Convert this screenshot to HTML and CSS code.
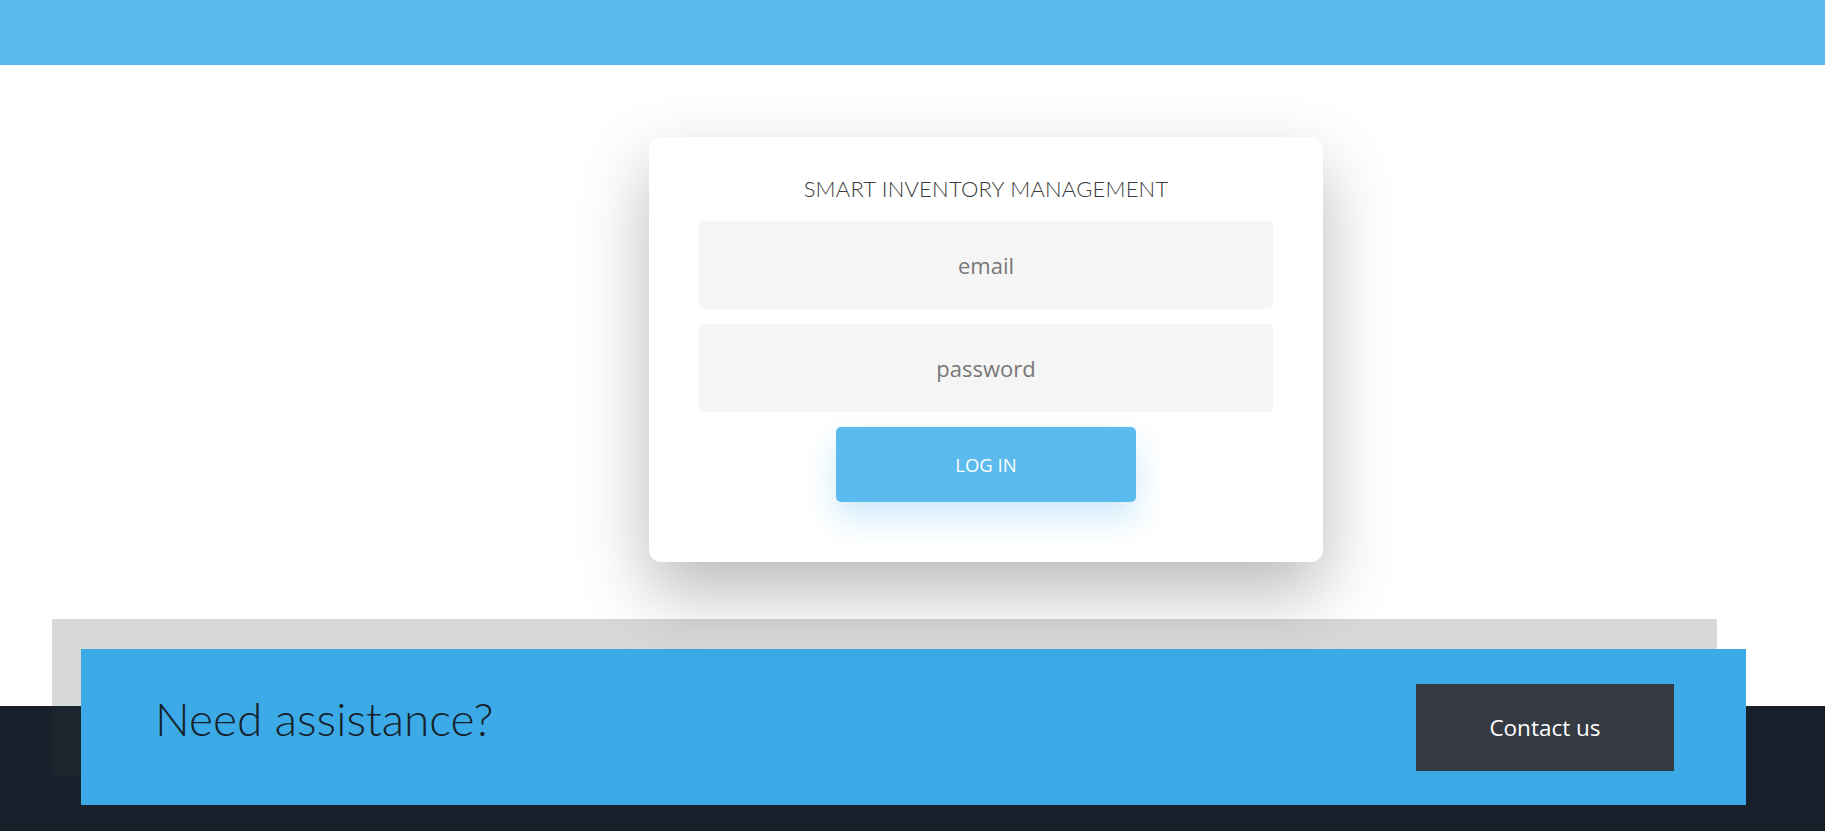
FILE: index.html
```html
<!DOCTYPE html>
<html lang="en">
<head>
<meta charset="utf-8">
<title>Smart Inventory Management</title>
<link rel="stylesheet" href="styles.css">
</head>
<body>
<header class="topbar"></header>
<main class="login-area">
  <form class="card">
    <h1 class="card-title">SMART INVENTORY MANAGEMENT</h1>
    <input class="field" type="email" placeholder="email">
    <input class="field" type="password" placeholder="password">
    <button class="login-btn" type="button">LOG IN</button>
  </form>
</main>
<footer class="footer">
  <div class="assist">
    <h2 class="assist-title">Need assistance?</h2>
    <button class="contact-btn" type="button">Contact us</button>
  </div>
</footer>
</body>
</html>
```

FILE: styles.css
```css
* { box-sizing: border-box; }
html, body { margin: 0; padding: 0; }
body {
  background: #ffffff;
  font-family: "Open Sans", "Noto Sans", sans-serif;
  overflow: hidden;
}
.topbar {
  height: 65px;
  background: #57b9ec;
}
.login-area {
  display: flex;
  justify-content: center;
  padding: 72px 0 0 147px;
}
.card {
  position: relative;
  z-index: 1;
  width: 674px;
  padding: 39px 50px 60px;
  background: #ffffff;
  border-radius: 12px;
  box-shadow: 0 30px 70px rgba(0, 0, 0, 0.28);
  display: flex;
  flex-direction: column;
  align-items: center;
  gap: 15px;
}
.card-title {
  margin: 0 0 5px;
  font-family: "Lato", sans-serif;
  font-weight: 300;
  font-size: 22px;
  line-height: 25px;
  color: #3a3a3a;
  letter-spacing: 0.2px;
}
.field {
  width: 100%;
  height: 88px;
  border: none;
  border-radius: 5px;
  background: #f5f5f5;
  text-align: center;
  font-family: "Open Sans", sans-serif;
  font-size: 22px;
  color: #333;
  outline: none;
}
.field::placeholder { color: #777777; }
.login-btn {
  width: 300px;
  height: 75px;
  border: none;
  border-radius: 5px;
  background: #5bbaee;
  color: #ffffff;
  font-family: "Open Sans", sans-serif;
  font-size: 18.5px;
  box-shadow: 0 16px 32px rgba(91, 186, 238, 0.3);
}
.footer {
  margin-top: 87px;
  padding: 0 79px 26px 81px;
  background: linear-gradient(to bottom, #ffffff 57px, #161f2a 57px);
}
.assist {
  height: 156px;
  background: #3baae7;
  box-shadow: -29px -30px 0 rgba(54, 58, 67, 0.2);
  display: flex;
  align-items: center;
  justify-content: space-between;
  padding: 0 72px 0 74px;
}
.assist-title {
  margin: 0 0 16px;
  font-family: "Lato", sans-serif;
  font-weight: 300;
  font-size: 46px;
  line-height: 1.2;
  color: #161f2a;
}
.contact-btn {
  width: 258px;
  height: 87px;
  border: none;
  background: #363a43;
  color: #ffffff;
  font-family: "Open Sans", sans-serif;
  font-size: 22.5px;
}
```
